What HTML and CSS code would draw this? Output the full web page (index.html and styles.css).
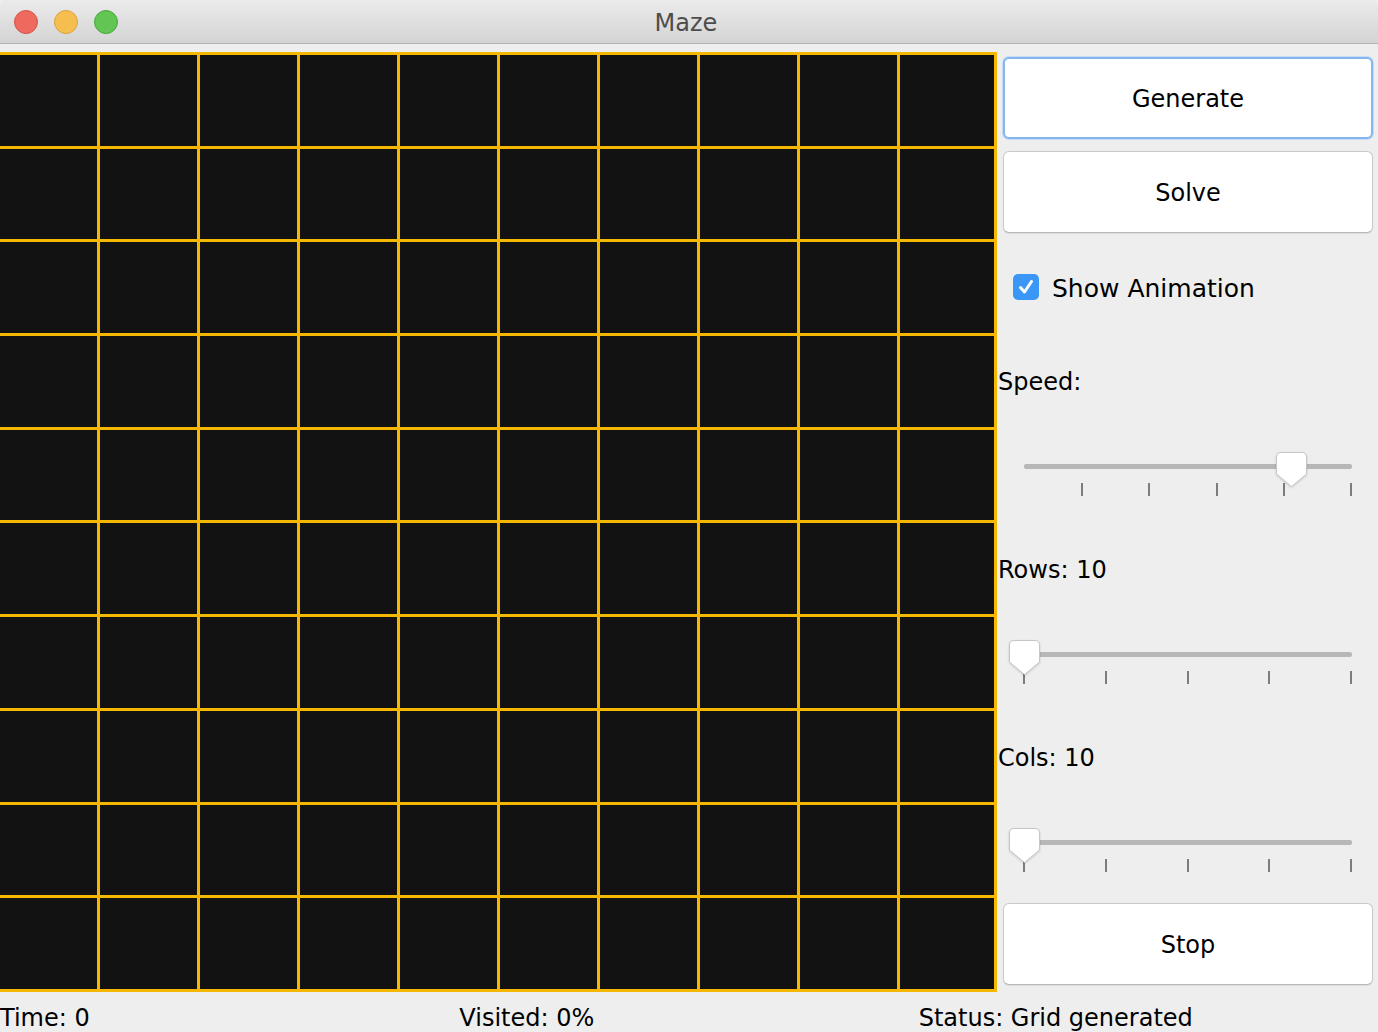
FILE: index.html
```html
<!DOCTYPE html>
<html>
<head>
<meta charset="utf-8">
<title>Maze</title>
<link rel="stylesheet" href="styles.css">
</head>
<body>
<div class="window">
  <div class="titlebar">
    <div class="lights">
      <span class="light red"></span>
      <span class="light yellow"></span>
      <span class="light green"></span>
    </div>
    <div class="title">Maze</div>
  </div>
  <div class="main">
    <div class="maze">
      <div class="c"></div><div class="c"></div><div class="c"></div><div class="c"></div><div class="c"></div><div class="c"></div><div class="c"></div><div class="c"></div><div class="c"></div><div class="c"></div>
      <div class="c"></div><div class="c"></div><div class="c"></div><div class="c"></div><div class="c"></div><div class="c"></div><div class="c"></div><div class="c"></div><div class="c"></div><div class="c"></div>
      <div class="c"></div><div class="c"></div><div class="c"></div><div class="c"></div><div class="c"></div><div class="c"></div><div class="c"></div><div class="c"></div><div class="c"></div><div class="c"></div>
      <div class="c"></div><div class="c"></div><div class="c"></div><div class="c"></div><div class="c"></div><div class="c"></div><div class="c"></div><div class="c"></div><div class="c"></div><div class="c"></div>
      <div class="c"></div><div class="c"></div><div class="c"></div><div class="c"></div><div class="c"></div><div class="c"></div><div class="c"></div><div class="c"></div><div class="c"></div><div class="c"></div>
      <div class="c"></div><div class="c"></div><div class="c"></div><div class="c"></div><div class="c"></div><div class="c"></div><div class="c"></div><div class="c"></div><div class="c"></div><div class="c"></div>
      <div class="c"></div><div class="c"></div><div class="c"></div><div class="c"></div><div class="c"></div><div class="c"></div><div class="c"></div><div class="c"></div><div class="c"></div><div class="c"></div>
      <div class="c"></div><div class="c"></div><div class="c"></div><div class="c"></div><div class="c"></div><div class="c"></div><div class="c"></div><div class="c"></div><div class="c"></div><div class="c"></div>
      <div class="c"></div><div class="c"></div><div class="c"></div><div class="c"></div><div class="c"></div><div class="c"></div><div class="c"></div><div class="c"></div><div class="c"></div><div class="c"></div>
      <div class="c"></div><div class="c"></div><div class="c"></div><div class="c"></div><div class="c"></div><div class="c"></div><div class="c"></div><div class="c"></div><div class="c"></div><div class="c"></div>
    </div>
    <div class="side">
      <div class="btn-cell"><div class="btn focused">Generate</div></div>
      <div class="btn-cell"><div class="btn">Solve</div></div>
      <div class="check-row">
        <span class="checkbox"><svg width="26" height="26" viewBox="0 0 26 26"><path d="M7.5 13.5 L11.5 18 L18.5 7.5" fill="none" stroke="#fff" stroke-width="3" stroke-linecap="round" stroke-linejoin="round"/></svg></span>
        <span class="check-label">Show Animation</span>
      </div>
      <div class="label">Speed:</div>
      <div class="slider-cell">
        <div class="slider">
          <div class="track"></div>
          <div class="ticks speed-ticks"><i></i><i></i><i></i><i></i><i></i></div>
          <svg class="thumb speed-thumb" width="32" height="36" viewBox="0 0 32 36"><path d="M5 0.5 H26 Q30.5 0.5 30.5 5 V22 L15.5 34.5 L0.5 22 V5 Q0.5 0.5 5 0.5 Z" fill="#fff" stroke="#c6c6c6"/></svg>
        </div>
      </div>
      <div class="label">Rows: 10</div>
      <div class="slider-cell">
        <div class="slider">
          <div class="track"></div>
          <div class="ticks"><i></i><i></i><i></i><i></i><i></i></div>
          <svg class="thumb min-thumb" width="32" height="36" viewBox="0 0 32 36"><path d="M5 0.5 H26 Q30.5 0.5 30.5 5 V22 L15.5 34.5 L0.5 22 V5 Q0.5 0.5 5 0.5 Z" fill="#fff" stroke="#c6c6c6"/></svg>
        </div>
      </div>
      <div class="label">Cols: 10</div>
      <div class="slider-cell">
        <div class="slider">
          <div class="track"></div>
          <div class="ticks"><i></i><i></i><i></i><i></i><i></i></div>
          <svg class="thumb min-thumb" width="32" height="36" viewBox="0 0 32 36"><path d="M5 0.5 H26 Q30.5 0.5 30.5 5 V22 L15.5 34.5 L0.5 22 V5 Q0.5 0.5 5 0.5 Z" fill="#fff" stroke="#c6c6c6"/></svg>
        </div>
      </div>
      <div class="btn-cell"><div class="btn">Stop</div></div>
    </div>
  </div>
  <div class="status">
    <div>Time: 0</div>
    <div>Visited: 0%</div>
    <div>Status: Grid generated</div>
  </div>
</div>
</body>
</html>
```
FILE: styles.css
```css
html, body {
  margin: 0;
  padding: 0;
  background: #eeeeee;
}
body {
  font-family: "DejaVu Sans", "Liberation Sans", sans-serif;
  font-size: 24px;
  color: #000;
}
.window {
  width: 1378px;
  height: 1032px;
  overflow: hidden;
  background: #eeeeee;
  display: flex;
  flex-direction: column;
}
.titlebar {
  height: 43px;
  flex: none;
  border-bottom: 1px solid #b3b3b3;
  background: linear-gradient(#ebebeb, #d4d4d4);
  border-radius: 6px 6px 0 0;
  display: flex;
  align-items: center;
  position: relative;
}
.lights {
  display: flex;
  gap: 16px;
  padding-left: 14px;
  padding-top: 1px;
}
.light {
  width: 22px;
  height: 22px;
  border-radius: 50%;
  border: 1px solid;
}
.red { background: #ee6a5f; border-color: #d5534a; }
.yellow { background: #f6be4f; border-color: #dba23d; }
.green { background: #62c554; border-color: #4aa93e; }
.title {
  position: absolute;
  left: 0;
  right: 0;
  top: 0;
  line-height: 47px;
  text-align: center;
  color: #4d4d4d;
  font-size: 24px;
  padding-right: 6px;
}
.main {
  display: flex;
  height: 948px;
  flex: none;
}
.maze {
  margin-top: 8px;
  width: 997px;
  height: 940px;
  box-sizing: border-box;
  padding: 3px 3px 3px 0;
  background: #f6b700;
  display: grid;
  grid-template-columns: repeat(9, 97px) 94px;
  grid-template-rows: repeat(10, 1fr);
  gap: 3px;
}
.c {
  background: #121212;
}
.side {
  margin-top: 6px;
  width: 381px;
  display: grid;
  grid-template-rows: repeat(10, 94px);
}
.btn-cell {
  padding: 7px 5px 5px 6px;
}
.btn {
  box-sizing: border-box;
  height: 82px;
  background: #fff;
  border: 1px solid #c9c9c9;
  border-bottom-color: #b9b9b9;
  border-radius: 6px;
  box-shadow: 0 1px 1px rgba(0,0,0,0.08);
  display: flex;
  align-items: center;
  justify-content: center;
  padding-top: 1px;
}
.btn.focused {
  border: 2px solid #86b6ee;
  box-shadow: 0 0 0 1px #c5dbf6;
}
.check-row {
  display: flex;
  align-items: center;
  padding-left: 16px;
  padding-top: 6px;
  gap: 13px;
}
.checkbox {
  width: 26px;
  height: 26px;
  border-radius: 5px;
  background: #3a97f8;
  display: block;
  margin-top: -2px;
}
.checkbox svg { display: block; }
.check-label {
  font-size: 25px;
}
.label {
  display: flex;
  align-items: center;
  padding-left: 1px;
  padding-top: 5px;
}
.slider-cell {
  padding-left: 27px;
  padding-right: 26px;
}
.slider {
  position: relative;
  padding-top: 38px;
}
.track {
  height: 5px;
  background: #b7b7b7;
  border-radius: 2px;
}
.ticks {
  margin-top: 14px;
  margin-left: -1px;
  height: 13px;
  display: flex;
  justify-content: space-between;
}
.ticks i {
  width: 2px;
  height: 13px;
  background: #7c7c7c;
}
.speed-ticks {
  margin-left: 57px;
}
.thumb {
  position: absolute;
  top: 26px;
  filter: drop-shadow(0 1px 1px rgba(0,0,0,0.15));
}
.speed-thumb { left: 252px; }
.min-thumb { left: -15px; }
.status {
  display: grid;
  grid-template-columns: repeat(3, 1fr);
  height: 40px;
  box-sizing: border-box;
  padding-top: 12px;
  line-height: 28px;
  overflow: hidden;
}
```
